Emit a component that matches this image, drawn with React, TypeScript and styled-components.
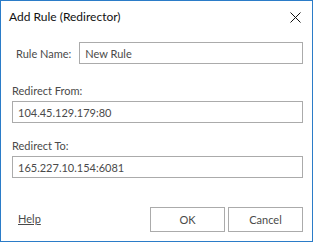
import React from "react";
import styled, { createGlobalStyle } from "styled-components";

const Global = createGlobalStyle`
  html, body { margin: 0; padding: 0; background: #ffffff; }
  * { box-sizing: border-box; }
`;

const Window = styled.div`
  width: 313px;
  height: 242px;
  border: 1px solid #2b7cc8;
  background: #ffffff;
  display: flex;
  flex-direction: column;
  font-family: Lato, "Noto Sans", sans-serif;
  color: #444444;
`;

const TitleBar = styled.div`
  height: 31px;
  display: flex;
  align-items: center;
  justify-content: space-between;
  padding: 0 10px 0 8px;
`;

const Title = styled.div`
  font-size: 12px;
  color: #111111;
  line-height: 16px;
  padding-top: 1px;
`;

const CloseButton = styled.button`
  width: 14px;
  height: 14px;
  padding: 0;
  border: none;
  background: transparent;
  display: flex;
  align-items: center;
  justify-content: center;
  margin-top: 1px;
`;

const Body = styled.div`
  flex: 1;
  display: flex;
  flex-direction: column;
  padding: 10px 9px 0 11px;
`;

const InlineRow = styled.div`
  display: flex;
  align-items: center;
  gap: 8px;
`;

const Label = styled.label<{ $indent?: number }>`
  font-size: 11px;
  line-height: 15px;
  color: #4a4a4a;
  padding-left: ${(p) => p.$indent ?? 0}px;
  white-space: nowrap;
`;

const Field = styled.div<{ $top: number }>`
  display: flex;
  flex-direction: column;
  gap: 3px;
  margin-top: ${(p) => p.$top}px;
`;

const Input = styled.input`
  flex: 1 1 auto;
  min-width: 0;
  height: 22px;
  border: 1px solid #ababab;
  padding: 0 5px;
  font-family: inherit;
  font-size: 11px;
  color: #4a4a4a;
  background: #ffffff;
  outline: none;
`;

const Footer = styled.div`
  margin-top: auto;
  display: flex;
  align-items: center;
  padding: 0 9px 9px 17px;
`;

const HelpLink = styled.a`
  font-size: 11px;
  color: #4a4a4a;
  text-decoration: underline;
  margin-right: auto;
  margin-top: -2px;
`;

const Buttons = styled.div`
  display: flex;
  gap: 3px;
`;

const Button = styled.button`
  width: 75px;
  height: 25px;
  border: 1px solid #ababab;
  background: #ffffff;
  font-family: inherit;
  font-size: 11px;
  color: #4a4a4a;
  padding: 0;
`;

export default function App() {
  return (
    <>
      <Global />
      <Window>
        <TitleBar>
          <Title>Add Rule (Redirector)</Title>
          <CloseButton aria-label="Close">
            <svg width="11" height="11" viewBox="0 0 11 11">
              <path d="M0.5 0.5 L10.5 10.5 M10.5 0.5 L0.5 10.5" stroke="#111" strokeWidth="1" />
            </svg>
          </CloseButton>
        </TitleBar>
        <Body>
          <InlineRow>
            <Label $indent={4}>Rule Name:</Label>
            <Input defaultValue="New Rule" />
          </InlineRow>
          <Field $top={19}>
            <Label>Redirect From:</Label>
            <Input defaultValue="104.45.129.179:80" />
          </Field>
          <Field $top={15}>
            <Label>Redirect To:</Label>
            <Input defaultValue="165.227.10.154:6081" />
          </Field>
        </Body>
        <Footer>
          <HelpLink href="#">Help</HelpLink>
          <Buttons>
            <Button>OK</Button>
            <Button>Cancel</Button>
          </Buttons>
        </Footer>
      </Window>
    </>
  );
}
